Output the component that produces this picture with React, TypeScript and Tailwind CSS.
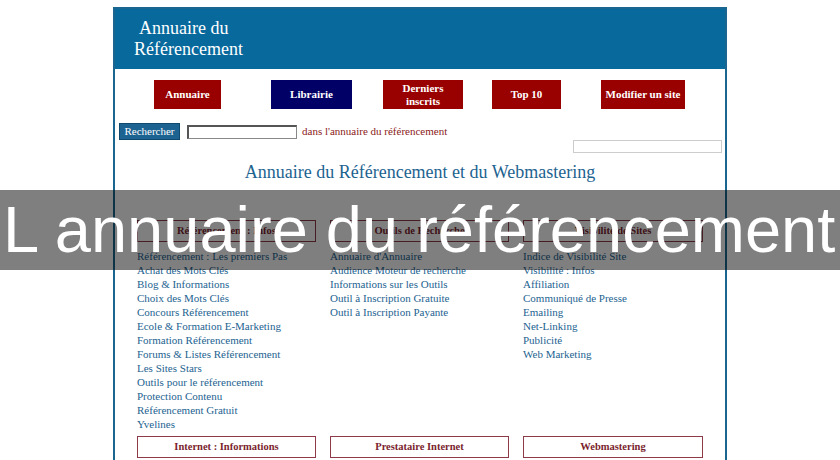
export default function App() {
  const col1 = [
    'Référencement : Les premiers Pas',
    'Achat des Mots Clés',
    'Blog & Informations',
    'Choix des Mots Clés',
    'Concours Référencement',
    'Ecole & Formation E-Marketing',
    'Formation Référencement',
    'Forums & Listes Référencement',
    'Les Sites Stars',
    'Outils pour le référencement',
    'Protection Contenu',
    'Référencement Gratuit',
    'Yvelines'
  ]
  const col2 = [
    "Annuaire d'Annuaire",
    'Audience Moteur de recherche',
    'Informations sur les Outils',
    'Outil à Inscription Gratuite',
    'Outil à Inscription Payante'
  ]
  const col3 = [
    'Indice de Visibilité Site',
    'Visibilité : Infos',
    'Affiliation',
    'Communiqué de Presse',
    'Emailing',
    'Net-Linking',
    'Publicité',
    'Web Marketing'
  ]

  const box =
    'flex h-[22px] items-center justify-center border border-[#8e3a48] text-[10.5px] font-bold text-[#7a1f2e]'

  return (
    <div className="relative h-[460px] overflow-hidden bg-white font-['Liberation_Serif',serif]">
      <div className="mt-[7px] ml-[113px] w-[614px] border-2 border-[#1b6690]">
        {/* Header */}
        <div className="h-[60px] bg-[#08699d] pt-[9px] pl-[19px] text-[18px] leading-[21px] text-white">
          <p className="pl-[5px]">Annuaire du</p>
          <p>Référencement</p>
        </div>

        {/* Nav */}
        <div className="mt-[11px] flex pl-[39px] text-[11px] leading-[13px] font-bold text-white">
          <div className="flex h-[29px] w-[67px] items-center justify-center bg-[#990000]">Annuaire</div>
          <div className="ml-[50px] flex h-[29px] w-[81px] items-center justify-center bg-[#000066]">Librairie</div>
          <div className="ml-[31px] flex h-[29px] w-[80px] flex-col items-center justify-center bg-[#990000] text-center">
            <span>Derniers</span>
            <span>inscrits</span>
          </div>
          <div className="ml-[29px] flex h-[29px] w-[69px] items-center justify-center bg-[#990000]">Top 10</div>
          <div className="ml-[40px] flex h-[29px] w-[84px] items-center justify-center bg-[#990000]">Modifier un site</div>
        </div>

        {/* Search */}
        <div className="mt-[14px] flex items-center pl-[4px]">
          <div className="flex h-[17px] w-[61px] items-center justify-center border border-[#0d4a6e] bg-[#1d6392] text-[11px] text-white">
            Rechercher
          </div>
          <div className="ml-[7px] h-[14px] w-[110px] border border-t-2 border-l-2 border-[#888] border-t-[#555] border-l-[#555]" />
          <span className="ml-[5px] text-[11px] text-[#8b1a1a]">dans l'annuaire du référencement</span>
        </div>
        <div className="flex justify-end pr-[3px]">
          <div className="h-[13px] w-[149px] border border-[#ccc]" />
        </div>

        {/* Title */}
        <p className="mt-[8px] text-center text-[18px] leading-[22px] text-[#1d6390]">
          Annuaire du Référencement et du Webmastering
        </p>

        {/* Categories */}
        <div className="mt-[37px] grid grid-cols-[179px_179px_180px] gap-x-[14px] pl-[22px]">
          <div className={box}>Référencement : Infos</div>
          <div className={box}>Outils de Recherche</div>
          <div className={box}>Visibilité de Sites</div>

          <ul className="mt-[7px] text-[11px] leading-[14px] text-[#1d6390]">
            {col1.map((t) => (
              <li key={t}>{t}</li>
            ))}
          </ul>
          <ul className="mt-[7px] text-[11px] leading-[14px] text-[#1d6390]">
            {col2.map((t) => (
              <li key={t}>{t}</li>
            ))}
          </ul>
          <ul className="mt-[7px] text-[11px] leading-[14px] text-[#1d6390]">
            {col3.map((t) => (
              <li key={t}>{t}</li>
            ))}
          </ul>

          <div className={`${box} mt-[5px]`}>Internet : Informations</div>
          <div className={`${box} mt-[5px]`}>Prestataire Internet</div>
          <div className={`${box} mt-[5px]`}>Webmastering</div>
        </div>
        <div className="h-[40px]" />
      </div>

      {/* Overlay caption */}
      <div className="absolute top-[190px] left-0 h-[80px] w-full bg-black/50">
        <p className="pl-[3px] font-['Liberation_Sans',Arial,sans-serif] text-[65px] leading-[80px] whitespace-nowrap text-white">
          L annuaire du référencement
        </p>
      </div>
    </div>
  )
}
